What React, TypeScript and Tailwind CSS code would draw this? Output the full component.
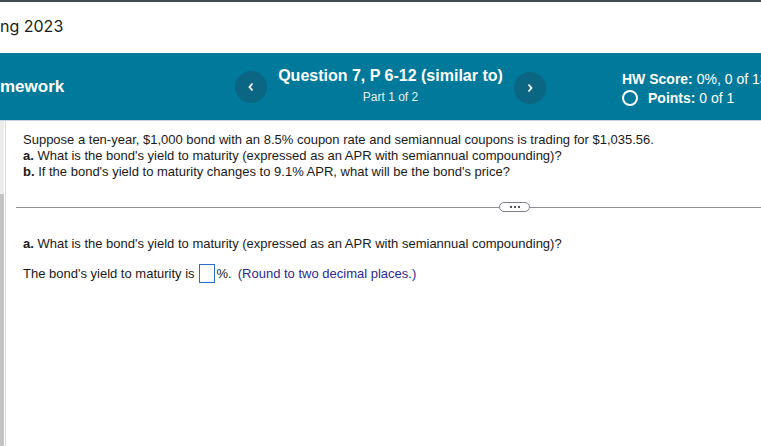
import React from "react";

export default function App() {
  return (
    <div className="w-[761px] h-[446px] overflow-hidden bg-white flex flex-col" style={{ fontFamily: '"Liberation Sans", Arial, sans-serif' }}>
      <div className="h-[2px] bg-[#3d4b53] shrink-0" />
      <div className="h-[51px] flex items-center shrink-0">
        <span className="text-[16px] text-[#1c1c1c] leading-none -mt-[4px]" style={{ fontFamily: 'Inter, "Liberation Sans", sans-serif' }}>ng 2023</span>
      </div>
      <div className="h-[67px] bg-[#00799a] flex items-center text-white shrink-0 overflow-hidden">
        <div className="w-[235px] shrink-0 text-[17px] font-bold">mework</div>
        <button className="w-[32px] h-[32px] shrink-0 rounded-full bg-[#0b6683] flex items-center justify-center">
          <svg width="8" height="10" viewBox="0 0 8 10"><path d="M5.5 1.5 L2.5 5 L5.5 8.5" stroke="white" strokeWidth="1.8" fill="none" /></svg>
        </button>
        <div className="w-[247px] shrink-0 flex flex-col items-center -mt-[2px]">
          <div className="text-[16px] font-bold leading-[20px]">Question 7, P 6-12 (similar to)</div>
          <div className="text-[12px] leading-[16px] mt-[3px] text-[#e6f2f6]">Part 1 of 2</div>
        </div>
        <button className="w-[32px] h-[32px] shrink-0 rounded-full bg-[#0b6683] flex items-center justify-center mt-[3px]">
          <svg width="8" height="10" viewBox="0 0 8 10"><path d="M2.5 1.5 L5.5 5 L2.5 8.5" stroke="white" strokeWidth="1.8" fill="none" /></svg>
        </button>
        <div className="ml-[76px] shrink-0 flex flex-col text-[14px] leading-[18px] whitespace-nowrap mt-[3px]">
          <div><span className="font-bold">HW Score:</span> 0%, 0 of 13 points</div>
          <div className="flex items-center mt-[1px]">
            <span className="w-[16px] h-[16px] rounded-full border-2 border-white inline-block mr-[10px]" />
            <span><span className="font-bold">Points:</span> 0 of 1</span>
          </div>
        </div>
      </div>
      <div className="h-[1px] bg-[#c9d0df] shrink-0" />
      <div className="flex flex-1">
        <div className="w-[4px] flex flex-col">
          <div className="h-[73px] bg-[#ececec]" />
          <div className="flex-1 bg-[#c3c3c3]" />
        </div>
        <div className="w-[1px]" />
        <div className="w-[1px] bg-[#d3d8e3]" />
        <div className="flex-1 flex flex-col">
          <div className="pl-[17px] pt-[11px] text-[13px] leading-[16px] text-[#1a1a1a]">
            <div>Suppose a ten-year, $1,000 bond with an 8.5% coupon rate and semiannual coupons is trading for $1,035.56.</div>
            <div><span className="font-bold">a.</span> What is the bond's yield to maturity (expressed as an APR with semiannual compounding)?</div>
            <div><span className="font-bold">b.</span> If the bond's yield to maturity changes to 9.1% APR, what will be the bond's price?</div>
          </div>
          <div className="mt-[22px] ml-[10px] flex items-center">
            <div className="w-[483px] h-[1px] bg-[#8e9099]" />
            <div className="w-[31px] h-[10px] rounded-full border border-[#7d7f88] flex items-center justify-center gap-[2px]">
              <span className="w-[2px] h-[2px] bg-[#555]" />
              <span className="w-[2px] h-[2px] bg-[#555]" />
              <span className="w-[2px] h-[2px] bg-[#555]" />
            </div>
            <div className="flex-1 h-[1px] bg-[#8e9099]" />
          </div>
          <div className="pl-[17px] mt-[24px] text-[13px] leading-[16px] text-[#1a1a1a]">
            <div><span className="font-bold">a.</span> What is the bond's yield to maturity (expressed as an APR with semiannual compounding)?</div>
            <div className="flex items-center mt-[12px]">
              <span>The bond's yield to maturity is</span>
              <span className="inline-block w-[16px] h-[19px] border border-[#2a6ad4] ml-[4px] mr-[2px]" />
              <span>%.</span>
              <span className="ml-[6px] text-[#2b2a8f]">(Round to two decimal places.)</span>
            </div>
          </div>
        </div>
      </div>
    </div>
  );
}
